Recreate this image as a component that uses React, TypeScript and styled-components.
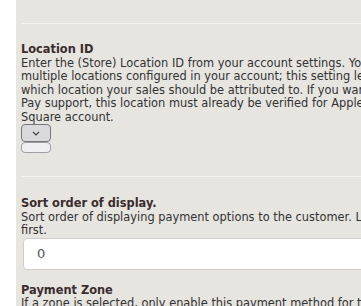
import React from "react";
import styled, { createGlobalStyle } from "styled-components";

const Global = createGlobalStyle`
  html, body { margin: 0; padding: 0; background: #ffffff; overflow: hidden; }
  body { font-family: "DejaVu Sans", Verdana, sans-serif; }
`;

const Page = styled.div`
  padding-left: 16px;
  width: 620px;
`;

const Panel = styled.div`
  background: #e6e5e0;
  padding: 0 5px;
  color: #333333;
  font-size: 11.4px;
  line-height: 13.5px;
`;

const Row = styled.div<{ $divider?: boolean; $top?: number; $bottom?: number }>`
  padding-top: ${(p) => p.$top ?? 0}px;
  padding-bottom: ${(p) => p.$bottom ?? 0}px;
  border-bottom: ${(p) => (p.$divider ? "1px solid #f4f3f0" : "none")};
`;

const Title = styled.div`
  font-weight: bold;
  color: #3a2c2c;
`;

const Desc = styled.div`
  white-space: nowrap;
`;

const Line = styled.span`
  display: block;
`;

const Controls = styled.div`
  display: flex;
  flex-direction: column;
  align-items: flex-start;
`;

const SelectBox = styled.div`
  box-sizing: border-box;
  width: 30px;
  height: 18px;
  background: #dadadd;
  border: 1px solid #76767a;
  border-radius: 4px;
  display: flex;
  align-items: center;
  justify-content: center;
`;

const EmptyInput = styled.div`
  box-sizing: border-box;
  width: 30px;
  height: 11px;
  background: #efeff1;
  border: 1px solid #a0a0a4;
  border-radius: 4px;
`;

const TextInput = styled.div`
  box-sizing: border-box;
  margin: 0 0 0 2px;
  height: 32px;
  background: #ffffff;
  border: 1px solid #cfcdc8;
  border-radius: 4px;
  padding-left: 13px;
  display: flex;
  align-items: center;
  font-size: 13px;
  color: #555555;
`;

const locationLines = [
  "Enter the (Store) Location ID from your account settings. You may have",
  "multiple locations configured in your account; this setting lets you choose",
  "which location your sales should be attributed to. If you want Apple",
  "Pay support, this location must already be verified for Apple Pay in your",
  "Square account.",
];

const sortLines = [
  "Sort order of displaying payment options to the customer. Lowest is displayed",
  "first.",
];

function Description({ lines }: { lines: string[] }) {
  return (
    <Desc>
      {lines.map((l, i) => (
        <Line key={i}>{l}</Line>
      ))}
    </Desc>
  );
}

export default function App() {
  return (
    <>
      <Global />
      <Page>
        <Panel>
          <Row $divider $top={23} />
          <Row $divider $top={19} $bottom={23}>
            <Title>Location ID</Title>
            <Description lines={locationLines} />
            <Controls>
              <SelectBox>
                <svg width="8" height="5" viewBox="0 0 8 5">
                  <path d="M1 1 L4 4 L7 1" fill="none" stroke="#444" strokeWidth="1.2" />
                </svg>
              </SelectBox>
              <EmptyInput />
            </Controls>
          </Row>
          <Row $top={20} $bottom={14}>
            <Title>Sort order of display.</Title>
            <Description lines={sortLines} />
            <TextInput>0</TextInput>
          </Row>
          <Row>
            <Title>Payment Zone</Title>
            <Description lines={["If a zone is selected, only enable this payment method for that zone."]} />
          </Row>
        </Panel>
      </Page>
    </>
  );
}
